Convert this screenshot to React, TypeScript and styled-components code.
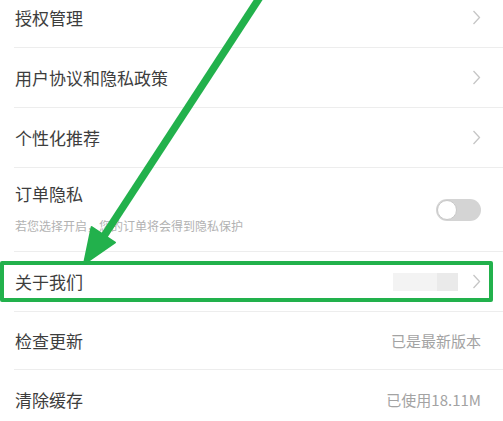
import { FC } from 'react';
import styled, { createGlobalStyle } from 'styled-components';

const GlobalStyle = createGlobalStyle`
  html, body {
    margin: 0;
    padding: 0;
    background: #fff;
    overflow: hidden;
  }
  * {
    box-sizing: border-box;
  }
`;

const GREEN = '#22b14c';

const Chevron: FC = () => (
  <ChevronIcon width="9" height="15" viewBox="0 0 9 15">
    <polyline points="1.5,1 7.5,7.5 1.5,14" fill="none" stroke="#c6c6c6" strokeWidth="1.3" />
  </ChevronIcon>
);

type LinkRowProps = {
  title: string;
  value?: string;
  arrow?: boolean;
  height?: number;
};

const LinkRow: FC<LinkRowProps> = ({ title, value, arrow, height }) => (
  <Row $height={height}>
    <Title>{title}</Title>
    {value && <Value>{value}</Value>}
    {arrow && <Chevron />}
  </Row>
);

const App: FC = () => (
  <Page>
    <GlobalStyle />
    <List>
      <LinkRow title="授权管理" arrow />
      <LinkRow title="用户协议和隐私政策" arrow />
      <LinkRow title="个性化推荐" arrow />
      <Row $height={84}>
        <TextColumn>
          <Title>订单隐私</Title>
          <SubTitle>若您选择开启，您的订单将会得到隐私保护</SubTitle>
        </TextColumn>
        <Switch>
          <Knob />
        </Switch>
      </Row>
      <Row>
        <Title>关于我们</Title>
        <Blurred>
          <BlurBlock $shade="#f3f3f3" $width={44} />
          <BlurBlock $shade="#eaeaea" $width={21} />
        </Blurred>
        <Chevron />
        <Highlight />
      </Row>
      <LinkRow title="检查更新" value="已是最新版本" height={58} />
      <LinkRow title="清除缓存" value="已使用18.11M" />
    </List>
    <Annotation viewBox="0 0 503 421" width="503" height="421">
      <line x1="262" y1="-6" x2="104" y2="236" stroke={GREEN} strokeWidth="7.5" />
      <polygon points="84,264 115,242.5 91.6,227.1" fill={GREEN} stroke={GREEN} strokeWidth="2" strokeLinejoin="round" />
    </Annotation>
  </Page>
);

export default App;

const Page = styled.div`
  position: relative;
  width: 503px;
  height: 421px;
  overflow: hidden;
  background: #fff;
  font-family: 'Noto Sans CJK SC', 'Noto Sans', sans-serif;
`;

const List = styled.div`
  display: flex;
  flex-direction: column;
  margin-top: -12px;
`;

const Row = styled.div<{ $height?: number }>`
  position: relative;
  display: flex;
  align-items: center;
  flex-shrink: 0;
  height: ${({ $height }) => $height ?? 60}px;
  padding: 0 22px 1px 15px;

  &::after {
    content: '';
    position: absolute;
    left: 14px;
    right: 0;
    bottom: 0;
    height: 1px;
    background: #ededed;
  }
`;

const TextColumn = styled.div`
  display: flex;
  flex-direction: column;
  flex: 1;
  align-self: flex-start;
  padding-top: 14px;
`;

const Title = styled.div`
  flex: 1;
  font-size: 17px;
  line-height: 24px;
  color: #3d3d3d;
`;

const SubTitle = styled.div`
  margin-top: 12px;
  font-size: 12px;
  line-height: 16px;
  color: #b2b2b2;
`;

const Value = styled.div`
  font-size: 15px;
  line-height: 20px;
  color: #a3a3a3;
`;

const ChevronIcon = styled.svg`
  display: block;
  flex-shrink: 0;
`;

const Blurred = styled.div`
  display: flex;
  height: 18px;
  margin-right: 14px;
`;

const BlurBlock = styled.div<{ $shade: string; $width: number }>`
  width: ${({ $width }) => $width}px;
  background: ${({ $shade }) => $shade};
`;

const Switch = styled.div`
  display: flex;
  align-items: center;
  width: 45px;
  height: 22px;
  padding: 1px;
  border-radius: 11px;
  background: #d4d4d4;
`;

const Knob = styled.div`
  width: 20px;
  height: 20px;
  border-radius: 50%;
  background: #fff;
  border: 1px solid #c8c8c8;
`;

const Highlight = styled.div`
  position: absolute;
  top: 9px;
  left: 0;
  right: 10px;
  height: 41px;
  border: 4px solid ${GREEN};
  border-radius: 2px;
  pointer-events: none;
`;

const Annotation = styled.svg`
  position: absolute;
  top: 0;
  left: 0;
  pointer-events: none;
`;
